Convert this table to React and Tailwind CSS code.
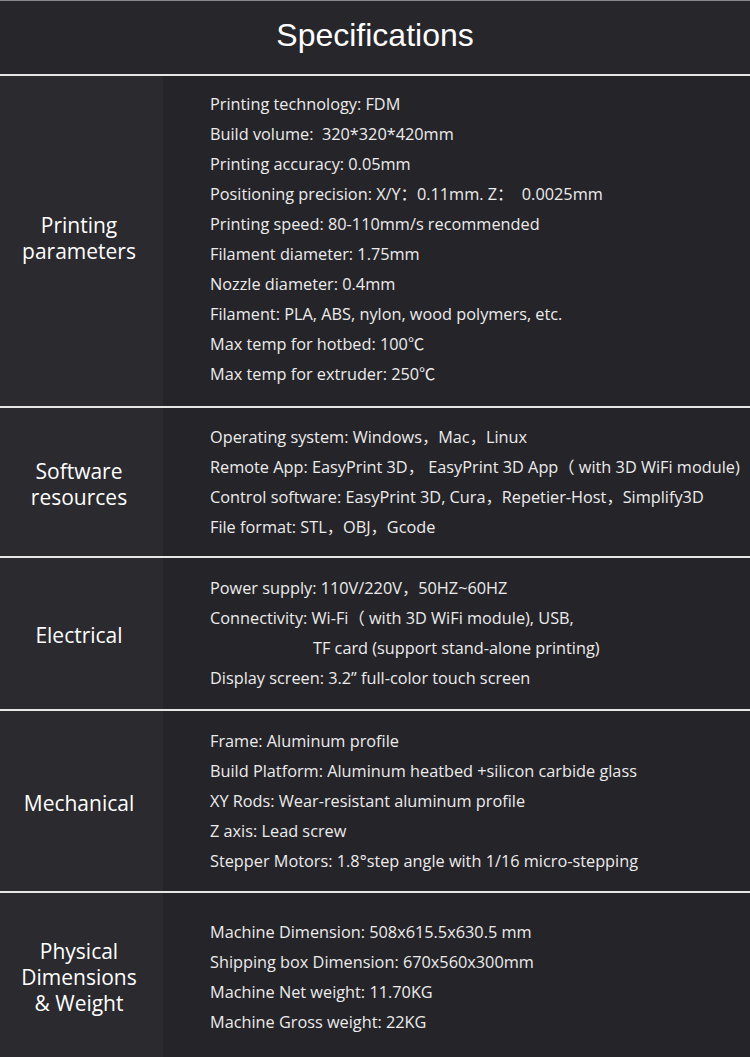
import React from "react";

const sections = [
  {
    label: ["Printing", "parameters"],
    labelPad: "pb-[6px]",
    pad: "pt-[13px] pb-[17px]",
    lines: [
      "Printing technology: FDM",
      "Build volume:  320*320*420mm",
      "Printing accuracy: 0.05mm",
      "Positioning precision: X/Y：0.11mm. Z：  0.0025mm",
      "Printing speed: 80-110mm/s recommended",
      "Filament diameter: 1.75mm",
      "Nozzle diameter: 0.4mm",
      "Filament: PLA, ABS, nylon, wood polymers, etc.",
      "Max temp for hotbed: 100℃",
      "Max temp for extruder: 250℃",
    ],
  },
  {
    label: ["Software", "resources"],
    labelPad: "pt-[3px]",
    pad: "pt-[14px] pb-[14px]",
    lines: [
      "Operating system: Windows，Mac，Linux",
      "Remote App: EasyPrint 3D， EasyPrint 3D App（ with 3D WiFi module)",
      "Control software: EasyPrint 3D, Cura，Repetier-Host，Simplify3D",
      "File format: STL，OBJ，Gcode",
    ],
  },
  {
    label: ["Electrical"],
    labelPad: "pt-[2px]",
    pad: "pt-[15px] pb-[16px]",
    lines: [
      "Power supply: 110V/220V，50HZ~60HZ",
      "Connectivity: Wi-Fi（ with 3D WiFi module), USB,",
      { indent: true, text: "TF card (support stand-alone printing)" },
      "Display screen: 3.2” full-color touch screen",
    ],
  },
  {
    label: ["Mechanical"],
    labelPad: "pt-[4px]",
    pad: "pt-[15px] pb-[15px]",
    lines: [
      "Frame: Aluminum profile",
      "Build Platform: Aluminum heatbed +silicon carbide glass",
      "XY Rods: Wear-resistant aluminum profile",
      "Z axis: Lead screw",
      "Stepper Motors: 1.8°step angle with 1/16 micro-stepping",
    ],
  },
  {
    label: ["Physical", "Dimensions", "& Weight"],
    labelPad: "pt-[4px]",
    pad: "pt-[24px] pb-[20px]",
    lines: [
      "Machine Dimension: 508x615.5x630.5 mm",
      "Shipping box Dimension: 670x560x300mm",
      "Machine Net weight: 11.70KG",
      "Machine Gross weight: 22KG",
    ],
  },
];

const bodyFont = "font-['Open_Sans','Noto_Sans_CJK_SC',sans-serif]";

export default function App() {
  return (
    <div className="w-[750px] h-[1057px] bg-[#252429] overflow-hidden">
      {/* Header */}
      <div className="h-[74px] bg-[#27262b] border-t border-[#8a8a8e] flex items-center justify-center pb-[5px]">
        <h1 className="font-['Liberation_Sans',Arial,sans-serif] text-[32px] text-white">
          Specifications
        </h1>
      </div>

      {sections.map((s, i) => (
        <div key={i} className="flex border-t-2 border-[#e6e6e6]">
          <div className={`w-[163px] shrink-0 bg-[#2b2a2f] flex items-center justify-center pr-[5px] ${s.labelPad}`}>
            <p className={`${bodyFont} text-[21px] leading-[26px] text-white text-center`}>
              {s.label.map((l, j) => (
                <span key={j} className="block">{l}</span>
              ))}
            </p>
          </div>
          <div className={`flex-1 ${s.pad} pl-[47px]`}>
            {s.lines.map((l, j) =>
              typeof l === "string" ? (
                <p key={j} className={`${bodyFont} text-[16.3px] leading-[30px] text-[#ececec] whitespace-pre`}>
                  {l}
                </p>
              ) : (
                <p key={j} className={`${bodyFont} text-[16.3px] leading-[30px] text-[#ececec] whitespace-pre pl-[103px]`}>
                  {l.text}
                </p>
              )
            )}
          </div>
        </div>
      ))}
    </div>
  );
}
